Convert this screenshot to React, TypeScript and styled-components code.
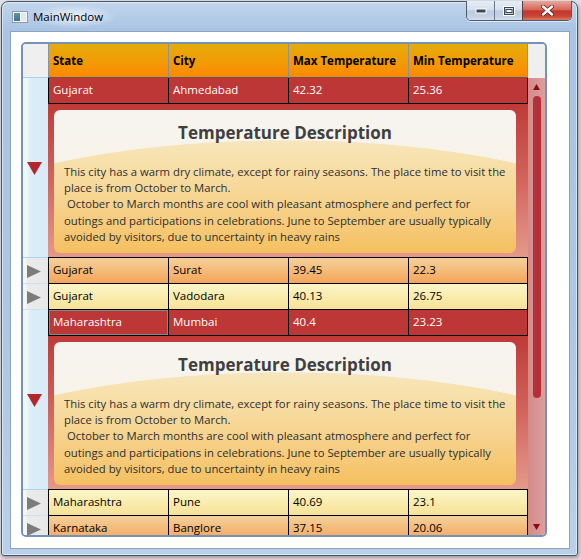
import React from 'react';
import styled, { createGlobalStyle } from 'styled-components';

const GlobalStyle = createGlobalStyle`
  html, body {
    margin: 0;
    padding: 0;
  }
  body {
    width: 581px;
    height: 559px;
    overflow: hidden;
    background: #dfe3e8;
    font-family: "Open Sans", "Liberation Sans", sans-serif;
  }
`;

type Tone = 'selected' | 'orange' | 'yellow';

interface CityRow {
  state: string;
  city: string;
  max: string;
  min: string;
  tone: Tone;
  expanded?: boolean;
  focused?: boolean;
}

const rows: CityRow[] = [
  { state: 'Gujarat', city: 'Ahmedabad', max: '42.32', min: '25.36', tone: 'selected', expanded: true },
  { state: 'Gujarat', city: 'Surat', max: '39.45', min: '22.3', tone: 'orange' },
  { state: 'Gujarat', city: 'Vadodara', max: '40.13', min: '26.75', tone: 'yellow' },
  { state: 'Maharashtra', city: 'Mumbai', max: '40.4', min: '23.23', tone: 'selected', expanded: true, focused: true },
  { state: 'Maharashtra', city: 'Pune', max: '40.69', min: '23.1', tone: 'yellow' },
  { state: 'Karnataka', city: 'Banglore', max: '37.15', min: '20.06', tone: 'orange' },
];

const columns = [
  { title: 'State', width: 121 },
  { title: 'City', width: 120 },
  { title: 'Max Temperature', width: 120 },
  { title: 'Min Temperature', width: 119 },
];

const description = [
  'This city has a warm dry climate, except for rainy seasons. The place time to visit the',
  'place is from October to March.',
  ' October to March months are cool with pleasant atmosphere and perfect for',
  'outings and participations in celebrations. June to September are usually typically',
  'avoided by visitors, due to uncertainty in heavy rains',
];

const toneBg: Record<Tone, string> = {
  selected: '#bd3737',
  orange: 'linear-gradient(to bottom, #f4d19c 0%, #f4bb7a 50%, #f4a55a 100%)',
  yellow: 'linear-gradient(to bottom, #fbf6c8 0%, #f9eaa9 60%, #f7e198 100%)',
};

/* ---------- window chrome ---------- */

const Window = styled.div`
  box-sizing: border-box;
  width: 577px;
  height: 555px;
  margin: 1px 0 0 1px;
  border: 1px solid #4a5563;
  border-radius: 7px 7px 3px 3px;
  background: linear-gradient(to bottom, #c2d6ec 0, #a9c4e4 28px, #adc7e5 60%, #bad0ea 100%);
  box-shadow: inset 0 0 0 1px rgba(255, 255, 255, 0.5), 1px 2px 4px rgba(0, 0, 0, 0.35);
  display: flex;
  flex-direction: column;
  padding: 0 7px 6px 8px;
`;

const TitleBar = styled.div`
  height: 29px;
  display: flex;
  align-items: center;
  flex-shrink: 0;
`;

const AppIcon = styled.svg`
  margin-left: 2px;
  flex-shrink: 0;
`;

const TitleText = styled.span`
  margin-left: 3px;
  padding: 4px 14px 4px 2px;
  font-family: "Open Sans", "Liberation Sans", sans-serif;
  font-size: 11.5px;
  color: #000;
  background: radial-gradient(ellipse closest-side, rgba(255, 255, 255, 0.75), rgba(255, 255, 255, 0));
`;

const Spacer = styled.div`
  flex: 1;
`;

const CaptionGroup = styled.div`
  align-self: flex-start;
  display: flex;
  height: 19px;
  margin-top: -1px;
  margin-right: -2px;
  border: 1px solid #4d5b6c;
  border-top: none;
  border-radius: 0 0 5px 5px;
  overflow: hidden;
  box-shadow: 0 1px 0 rgba(255, 255, 255, 0.6);
`;

const CaptionButton = styled.div<{ $w: number; $close?: boolean }>`
  width: ${p => p.$w}px;
  display: flex;
  align-items: center;
  justify-content: center;
  border-left: ${p => (p.$close ? '1px solid #5a3b3b' : '1px solid #6b7b8e')};
  background: ${p =>
    p.$close
      ? 'linear-gradient(to bottom, #e8a699 0%, #d7675a 45%, #c3382b 52%, #c84534 80%, #dc7a60 100%)'
      : 'linear-gradient(to bottom, #e6edf6 0%, #d6e1ee 45%, #bccbde 52%, #c3d2e4 80%, #d3e0ef 100%)'};
  &:first-child {
    border-left: none;
  }
`;

const Client = styled.div`
  flex: 1;
  box-sizing: border-box;
  border: 1px solid #8ea4be;
  background: #fff;
  padding: 10px 0 0 10px;
`;

/* ---------- data grid ---------- */

const Grid = styled.div`
  box-sizing: border-box;
  width: 526px;
  height: 495px;
  border: 2px solid #7592b7;
  border-radius: 5px;
  overflow: hidden;
  display: flex;
  flex-direction: column;
  background: #fff;
`;

const HeaderRow = styled.div`
  display: flex;
  height: 34px;
  flex-shrink: 0;
`;

const Corner = styled.div`
  width: 25px;
  box-sizing: border-box;
  background: #efefef;
  border-bottom: 1px solid #a7d3ee;
`;

const HeaderCell = styled.div<{ $w: number; $first?: boolean }>`
  box-sizing: border-box;
  width: ${p => p.$w}px;
  padding-left: 4px;
  display: flex;
  align-items: center;
  background: linear-gradient(to bottom, #e5ac0b 0%, #f29b05 55%, #ff8800 100%);
  border-left: ${p => (p.$first ? '1px solid #8a939c' : 'none')};
  border-right: 1px solid #8a939c;
  border-bottom: 1px solid #5b5b5b;
  font-size: 11.5px;
  font-weight: 700;
  color: #000;
  white-space: nowrap;
`;

const HeaderFiller = styled.div`
  flex: 1;
  background: #efefef;
`;

const Body = styled.div`
  flex: 1;
  min-height: 0;
  display: flex;
`;

const Records = styled.div`
  width: 505px;
  overflow: hidden;
  display: flex;
  flex-direction: column;
`;

const Record = styled.div`
  display: flex;
  flex-shrink: 0;
`;

const RowHeader = styled.div<{ $expanded?: boolean }>`
  width: 25px;
  flex-shrink: 0;
  box-sizing: border-box;
  padding: 2px 0 0 4px;
  display: flex;
  align-items: center;
  border-bottom: 1px solid ${p => (p.$expanded ? '#a9d6f0' : '#c9e3f3')};
  background: ${p =>
    p.$expanded
      ? 'linear-gradient(to right, #f3f9fd 0, #eef7fc 4px, #dcedf8 7px, #d8ebf7 100%)'
      : 'linear-gradient(to right, #fbfbfb 0, #f5f5f5 3px, #ebebeb 5px, #e7e7e7 100%)'};
`;

const RecordMain = styled.div`
  width: 480px;
  display: flex;
  flex-direction: column;
`;

const Row = styled.div<{ $tone: Tone }>`
  display: flex;
  height: 26px;
  box-sizing: border-box;
  border-bottom: 1px solid #000;
  background: ${p => toneBg[p.$tone]};
  color: ${p => (p.$tone === 'selected' ? '#fff' : '#000')};
`;

const Cell = styled.div<{ $w: number; $first?: boolean; $focused?: boolean }>`
  box-sizing: border-box;
  width: ${p => p.$w}px;
  padding: 0 0 2px 4px;
  display: flex;
  align-items: center;
  border-left: ${p => (p.$first ? '1px solid #000' : 'none')};
  border-right: 1px solid #000;
  box-shadow: ${p => (p.$focused ? 'inset 0 0 0 1px #7b8a8a' : 'none')};
  font-size: 11.5px;
  white-space: nowrap;
`;

const Details = styled.div`
  height: 154px;
  box-sizing: border-box;
  padding: 6px 12px 4px 6px;
  display: flex;
  border-bottom: 1px solid #000;
  background: linear-gradient(to bottom, #bf3a37 0%, #d0605a 45%, #e4998a 100%);
`;

const Card = styled.div`
  flex: 1;
  border-radius: 6px;
  padding: 11px 10px 0 10px;
  background:
    radial-gradient(400px 125px at 50% 155px, rgba(255, 255, 255, 0) 99.4%, rgba(247, 245, 241, 0.9) 100%),
    linear-gradient(to bottom, #f4eee4 0%, #f7e3b1 30%, #f6d38f 65%, #f5c060 100%);
`;

const CardTitle = styled.div`
  text-align: center;
  font-size: 17px;
  line-height: 24px;
  font-weight: 700;
  color: #3f3f3f;
`;

const CardText = styled.div`
  margin-top: 19px;
  font-size: 11.3px;
  line-height: 16.2px;
  color: #2e2e2e;
  white-space: pre;
`;

const ScrollBar = styled.div`
  width: 17px;
  flex-shrink: 0;
  display: flex;
  flex-direction: column;
  background: linear-gradient(to right, #d58a8a, #dc9e9e);
`;

const ScrollArrow = styled.div`
  height: 17px;
  flex-shrink: 0;
  display: flex;
  align-items: center;
  justify-content: center;
`;

const Track = styled.div`
  flex: 1;
  display: flex;
  justify-content: center;
  padding-left: 1px;
`;

const Thumb = styled.div`
  width: 8px;
  height: 302px;
  margin-top: 1px;
  border-radius: 4px;
  background: #b2303a;
`;

/* ---------- small drawings ---------- */

const ExpandGlyph: React.FC<{ open: boolean }> = ({ open }) =>
  open ? (
    <svg width="15" height="13" viewBox="0 0 15 13">
      <polygon points="0,0 15,0 7.5,13" fill="#b3272a" />
    </svg>
  ) : (
    <svg width="14" height="13" viewBox="0 0 14 13">
      <polygon points="0,0 14,6.5 0,13" fill="#7c7c7c" />
    </svg>
  );

const ArrowGlyph: React.FC<{ up?: boolean }> = ({ up }) => (
  <svg width="7" height="6" viewBox="0 0 7 6">
    <polygon points={up ? '0,6 7,6 3.5,0' : '0,0 7,0 3.5,6'} fill="#8a0c0c" />
  </svg>
);

export default function App() {
  return (
    <>
      <GlobalStyle />
      <Window>
        <TitleBar>
          <AppIcon width="16" height="12" viewBox="0 0 16 12">
            <defs>
              <linearGradient id="pane" x1="0" y1="0" x2="0" y2="1">
                <stop offset="0" stopColor="#5c9c8c" />
                <stop offset="1" stopColor="#3c6fa8" />
              </linearGradient>
            </defs>
            <rect x="0.5" y="0.5" width="15" height="11" fill="#f4f6f8" stroke="#8f9aa6" />
            <rect x="2" y="2" width="6" height="8" fill="url(#pane)" />
            <rect x="9" y="2" width="5" height="8" fill="#e4e8ec" />
          </AppIcon>
          <TitleText>MainWindow</TitleText>
          <Spacer />
          <CaptionGroup>
            <CaptionButton $w={27}>
              <svg width="12" height="6" viewBox="0 0 12 6">
                <rect x="1" y="1" width="10" height="4" fill="#3b4656" stroke="#fff" strokeWidth="1" />
              </svg>
            </CaptionButton>
            <CaptionButton $w={27}>
              <svg width="12" height="10" viewBox="0 0 12 10">
                <rect x="1" y="1" width="10" height="8" fill="none" stroke="#fff" strokeWidth="2" />
                <rect x="1.5" y="1.5" width="9" height="7" fill="none" stroke="#3b4656" strokeWidth="1" />
                <rect x="3" y="3.5" width="6" height="3" fill="#f2f5f9" stroke="#3b4656" strokeWidth="1" />
              </svg>
            </CaptionButton>
            <CaptionButton $w={48} $close>
              <svg width="13" height="11" viewBox="0 0 13 11">
                <path d="M2 1.5 L11 9.5 M11 1.5 L2 9.5" stroke="#5b2020" strokeWidth="4" strokeLinecap="round" />
                <path d="M2 1.5 L11 9.5 M11 1.5 L2 9.5" stroke="#fff" strokeWidth="2.4" strokeLinecap="round" />
              </svg>
            </CaptionButton>
          </CaptionGroup>
        </TitleBar>

        <Client>
          <Grid>
            <HeaderRow>
              <Corner />
              {columns.map((c, i) => (
                <HeaderCell key={c.title} $w={c.width} $first={i === 0}>
                  {c.title}
                </HeaderCell>
              ))}
              <HeaderFiller />
            </HeaderRow>

            <Body>
              <Records>
                {rows.map(r => {
                  const values = [r.state, r.city, r.max, r.min];
                  return (
                    <Record key={r.city}>
                      <RowHeader $expanded={r.expanded}>
                        <ExpandGlyph open={!!r.expanded} />
                      </RowHeader>
                      <RecordMain>
                        <Row $tone={r.tone}>
                          {values.map((v, i) => (
                            <Cell key={i} $w={columns[i].width} $first={i === 0} $focused={r.focused && i === 0}>
                              {v}
                            </Cell>
                          ))}
                        </Row>
                        {r.expanded && (
                          <Details>
                            <Card>
                              <CardTitle>Temperature Description</CardTitle>
                              <CardText>{description.join('\n')}</CardText>
                            </Card>
                          </Details>
                        )}
                      </RecordMain>
                    </Record>
                  );
                })}
              </Records>

              <ScrollBar>
                <ScrollArrow>
                  <ArrowGlyph up />
                </ScrollArrow>
                <Track>
                  <Thumb />
                </Track>
                <ScrollArrow>
                  <ArrowGlyph />
                </ScrollArrow>
              </ScrollBar>
            </Body>
          </Grid>
        </Client>
      </Window>
    </>
  );
}
